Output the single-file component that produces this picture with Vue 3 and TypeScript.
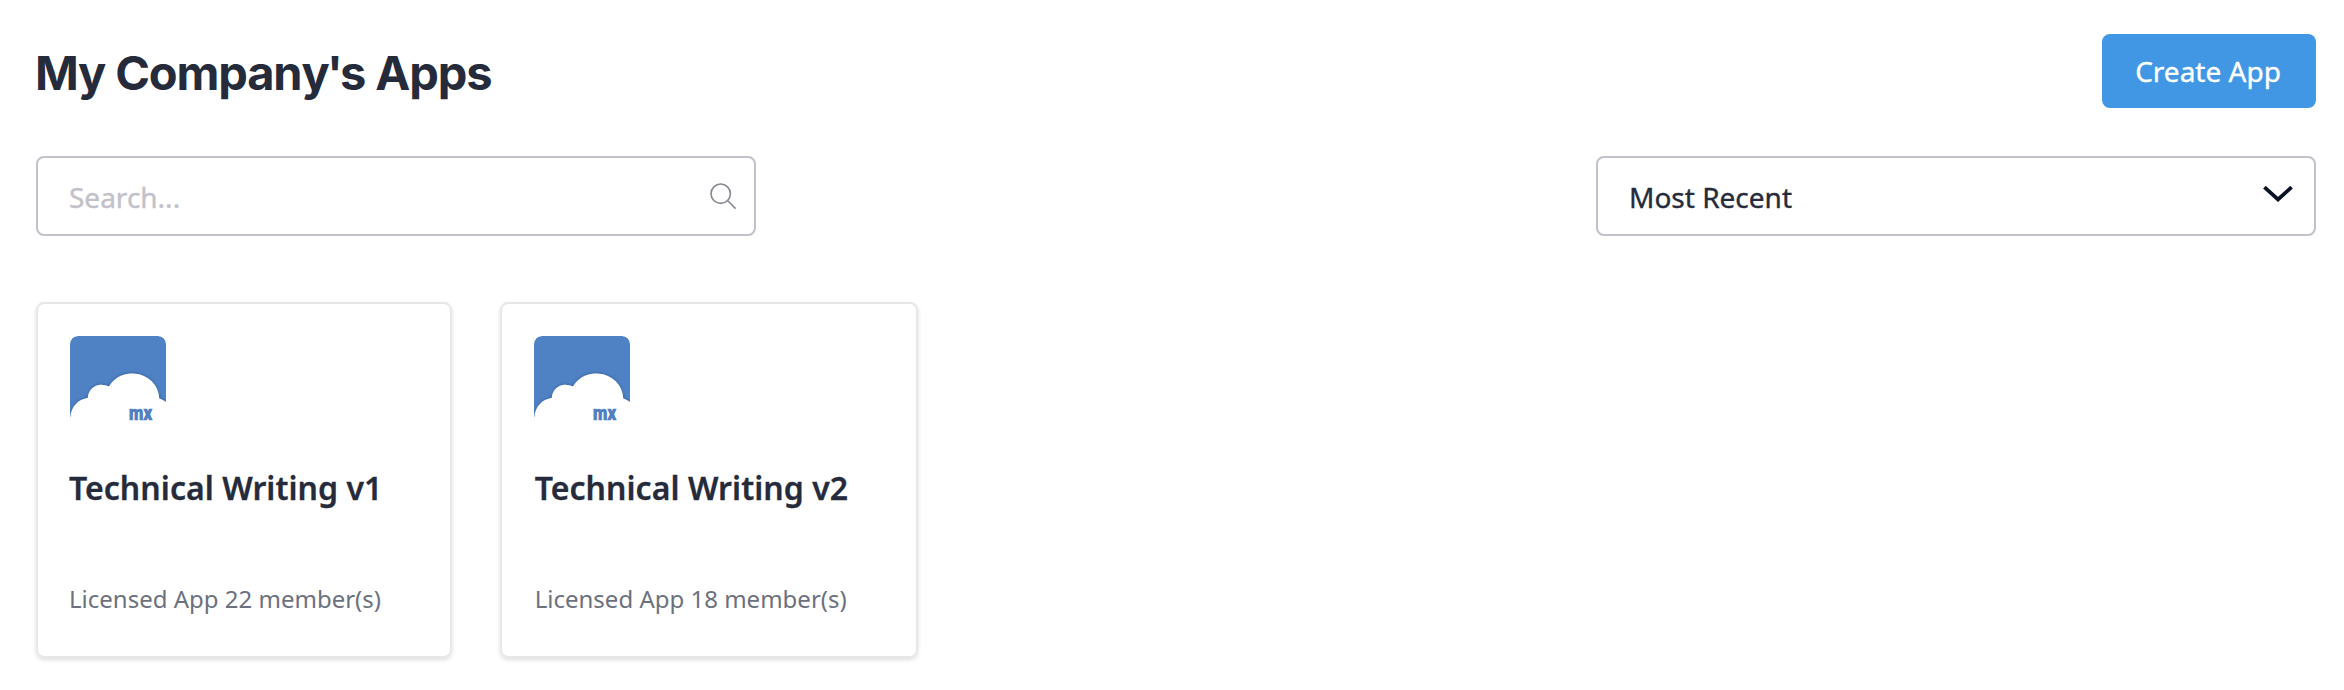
<script setup lang="ts">
import { ref, computed } from 'vue'

interface AppEntry {
  name: string
  licence: string
  members: number
}

const apps: AppEntry[] = [
  { name: 'Technical Writing v1', licence: 'Licensed App', members: 22 },
  { name: 'Technical Writing v2', licence: 'Licensed App', members: 18 },
]

const query = ref('')
const visibleApps = computed(() =>
  apps.filter((a) => a.name.toLowerCase().includes(query.value.toLowerCase())),
)
</script>

<template>
  <main class="page">
    <header class="header">
      <h1 class="heading">My Compan<span class="tight">y'</span>s Apps</h1>
      <button class="create" type="button">Create App</button>
    </header>

    <div class="filters">
      <label class="field">
        <input v-model="query" class="search" type="text" placeholder="Search..." />
        <svg class="glass" viewBox="0 0 28 28" width="28" height="28" fill="none">
          <circle cx="11.7" cy="11.7" r="9.7" />
          <path d="M18.8 18.8 26.6 26.6" />
        </svg>
      </label>
      <div class="field" role="button">
        <span class="sort">Most Recent</span>
        <svg class="chevron" viewBox="0 0 30 16" width="30" height="16" fill="none">
          <path d="M1.4 1.2 15 13.4 28.6 1.2" />
        </svg>
      </div>
    </div>

    <section class="cards">
      <article v-for="app in visibleApps" :key="app.name" class="card">
        <svg class="logo" viewBox="0 0 96 96" width="96" height="96">
          <defs>
            <clipPath id="tile"><rect width="96" height="96" rx="8" /></clipPath>
            <filter id="shade" x="-10%" y="-20%" width="120%" height="140%">
              <feDropShadow dx="0" dy="-0.5" stdDeviation="1.6" flood-color="#27508f" flood-opacity="0.7" />
            </filter>
          </defs>
          <g clip-path="url(#tile)">
            <path d="M0 8a8 8 0 0 1 8-8H88a8 8 0 0 1 8 8V81H0Z" fill="#4f82c4" />
            <path
              d="M-1 110V81H.4C1.2 71 8 63 17.8 62C18 54.5 24 48.8 31 48.8Q35.5 48.8 39 50.6C43.5 42.5 52 37.4 62 37.4C77 37.4 89 48.5 89.2 62.6Q93 63.8 99 68V110Z"
              fill="#fff"
              filter="url(#shade)"
            />
            <rect y="81" width="96" height="15" fill="#fff" />
          </g>
          <text x="59" y="84" textLength="23" lengthAdjust="spacingAndGlyphs">mx</text>
        </svg>
        <h2 class="name">{{ app.name }}</h2>
        <p class="meta">{{ app.licence }} {{ app.members }} member(s)</p>
      </article>
    </section>
  </main>
</template>

<style>
body {
  background: #fff;
}
</style>

<style scoped>
.page {
  box-sizing: border-box;
  height: 690px;
  padding: 34px 28px 0 36px;
  font-family: 'Noto Sans', sans-serif;
  color: #252b3b;
}
.header {
  display: flex;
  justify-content: space-between;
  height: 74px;
}
.heading {
  margin: 0 0 0 -1px;
  font-family: Inter, sans-serif;
  font-size: 47px;
  font-weight: 700;
  line-height: 77px;
  letter-spacing: -1.15px;
}
.tight {
  letter-spacing: -2.8px;
}
.create {
  width: 214px;
  height: 74px;
  padding: 0 2px 0 0;
  border: 0;
  border-radius: 8px;
  background: #4197e4;
  color: #fff;
  font: 400 28px/74px 'Noto Sans', sans-serif;
  -webkit-text-stroke: 0.35px;
}
.filters {
  display: flex;
  justify-content: space-between;
  margin-top: 48px;
}
.field {
  display: flex;
  align-items: center;
  justify-content: space-between;
  box-sizing: border-box;
  width: 720px;
  height: 80px;
  padding: 0 17px 0 31px;
  border: 2px solid #c2c1c9;
  border-radius: 8px;
}
.search {
  flex: 1;
  min-width: 0;
  height: 76px;
  padding: 2px 0 0;
  box-sizing: border-box;
  border: 0;
  outline: 0;
  background: transparent;
  color: #252b3b;
  font: 400 28px/38px 'Noto Sans', sans-serif;
  -webkit-text-stroke: 0.35px;
}
.search::placeholder {
  color: #c2c1c9;
  opacity: 1;
}
.sort {
  padding-top: 2px;
  font-size: 28px;
  line-height: 74px;
  -webkit-text-stroke: 0.35px;
}
.glass {
  stroke: #868791;
  stroke-width: 1.6;
}
.chevron {
  margin: 0 4px 4px 0;
  stroke: #0a1325;
  stroke-width: 3.8;
}
.cards {
  display: flex;
  gap: 48px;
  margin-top: 66px;
}
.card {
  box-sizing: border-box;
  width: 416px;
  height: 356px;
  padding: 32px;
  border: 2px solid #e7e7e7;
  border-radius: 8px;
  box-shadow: 0 2px 4px rgba(0, 0, 0, 0.13);
}
.card + .card {
  width: 418px;
}
.logo {
  display: block;
}
.logo text {
  fill: #4f7fbe;
  stroke: #4f7fbe;
  stroke-width: 0.7px;
  font: 900 20px Roboto, sans-serif;
}
.name {
  margin: 34px 0 0 0.7px;
  font-size: 32px;
  font-weight: 600;
  line-height: 44px;
  letter-spacing: 0.04px;
  white-space: nowrap;
  -webkit-text-stroke: 0.3px;
}
.meta {
  margin: 73px 0 0 0.7px;
  color: #6c717e;
  font-size: 24px;
  line-height: 32px;
  white-space: nowrap;
}
.card:first-child .name,
.card:first-child .meta {
  margin-left: -1px;
}
</style>
